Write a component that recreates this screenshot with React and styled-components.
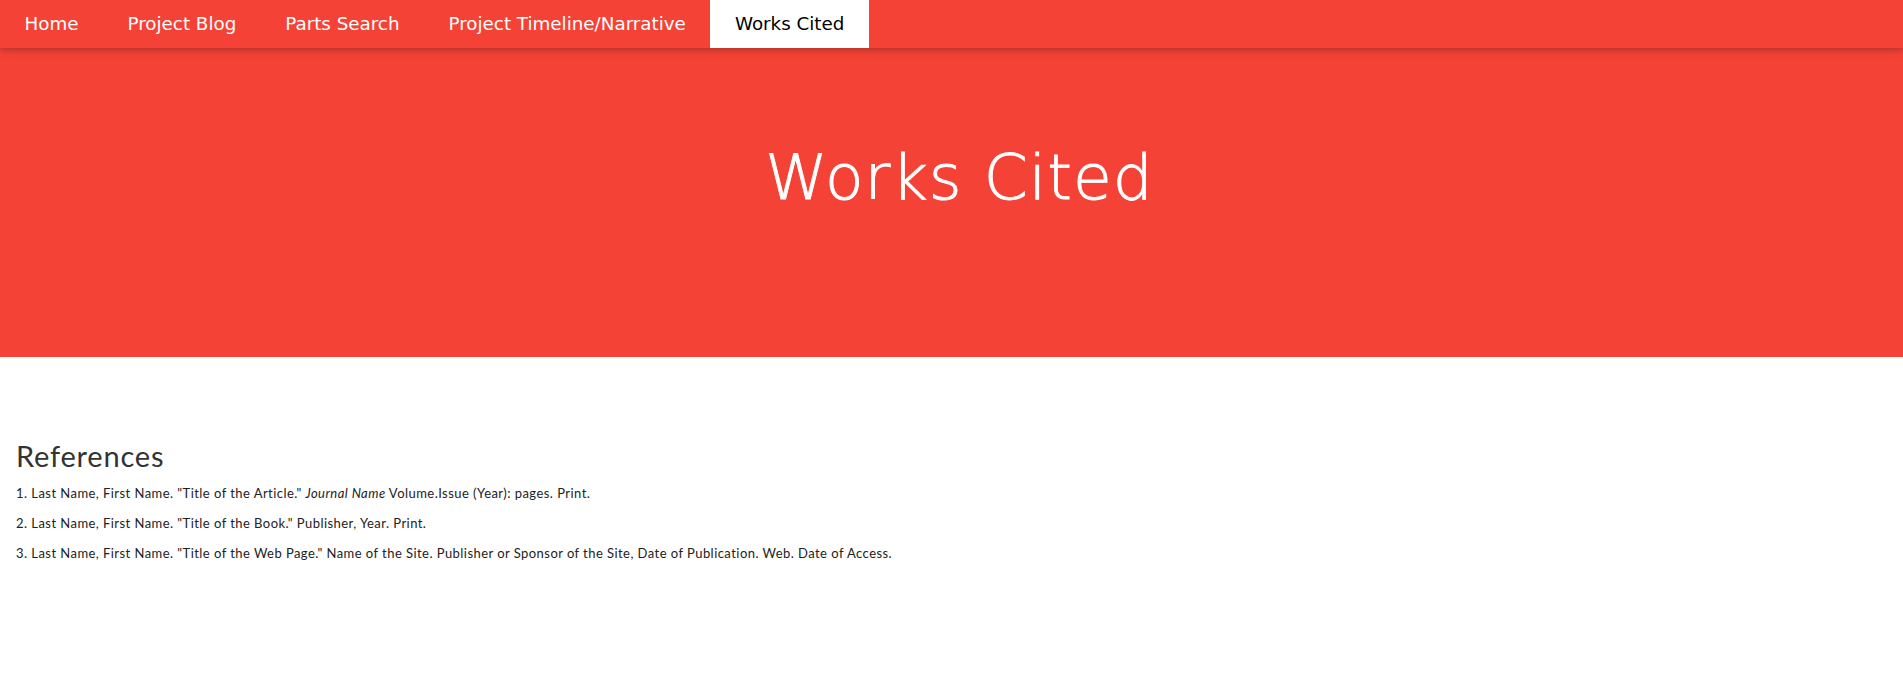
import React from "react";
import styled, { createGlobalStyle } from "styled-components";

const GlobalStyle = createGlobalStyle`
  body {
    margin: 0;
    background: #fff;
    font-family: "Lato", "Liberation Sans", sans-serif;
    color: rgba(0, 0, 0, 0.87);
  }
`;

const Nav = styled.nav`
  position: relative;
  z-index: 2;
  height: 48px;
  background: #f44336;
  box-shadow: 0 2px 5px 0 rgba(0, 0, 0, 0.16), 0 2px 10px 0 rgba(0, 0, 0, 0.12);
`;

const NavList = styled.ul`
  display: flex;
  margin: 0;
  padding: 0;
  list-style: none;
  height: 100%;
`;

const NavItem = styled.li`
  height: 100%;
`;

const NavLink = styled.a`
  display: block;
  height: 100%;
  padding: 0 24.5px;
  line-height: 48px;
  font-family: "DejaVu Sans", sans-serif;
  font-size: 18.3px;
  text-decoration: none;
  cursor: pointer;
  color: ${(p) => (p.$active ? "#000" : "#fff")};
  background: ${(p) => (p.$active ? "#fff" : "transparent")};
`;

const Hero = styled.header`
  background: #f44336;
  padding: 95px 0 144px 16px;
  text-align: center;
`;

const Title = styled.h1`
  margin: 0;
  font-family: "DejaVu Sans", sans-serif;
  font-weight: 300;
  font-size: 63px;
  line-height: 70px;
  letter-spacing: 1px;
  color: #fff;
  -webkit-text-stroke: 0.9px #fff;
`;

const Content = styled.main`
  padding: 82px 16px 40px;
`;

const Heading = styled.h2`
  margin: 0 0 10px;
  font-size: 29px;
  font-weight: 400;
  line-height: 1.2;
  letter-spacing: 0.8px;
  color: #333;
`;

const RefList = styled.div`
  display: flex;
  flex-direction: column;
  gap: 12px;
`;

const Ref = styled.p`
  margin: 0;
  font-size: 13px;
  line-height: 18px;
  letter-spacing: 0.45px;
  color: #222;
`;

const links = ["Home", "Project Blog", "Parts Search", "Project Timeline/Narrative", "Works Cited"];

export default function App() {
  return (
    <>
      <GlobalStyle />
      <Nav>
        <NavList>
          {links.map((l) => (
            <NavItem key={l}>
              <NavLink $active={l === "Works Cited"}>{l}</NavLink>
            </NavItem>
          ))}
        </NavList>
      </Nav>
      <Hero>
        <Title>Works Cited</Title>
      </Hero>
      <Content>
        <Heading>References</Heading>
        <RefList>
          <Ref>
            1. Last Name, First Name. "Title of the Article." <i>Journal Name</i> Volume.Issue (Year): pages. Print.
          </Ref>
          <Ref>2. Last Name, First Name. "Title of the Book." Publisher, Year. Print.</Ref>
          <Ref>
            3. Last Name, First Name. "Title of the Web Page." Name of the Site. Publisher or Sponsor of the Site, Date of
            Publication. Web. Date of Access.
          </Ref>
        </RefList>
      </Content>
    </>
  );
}
